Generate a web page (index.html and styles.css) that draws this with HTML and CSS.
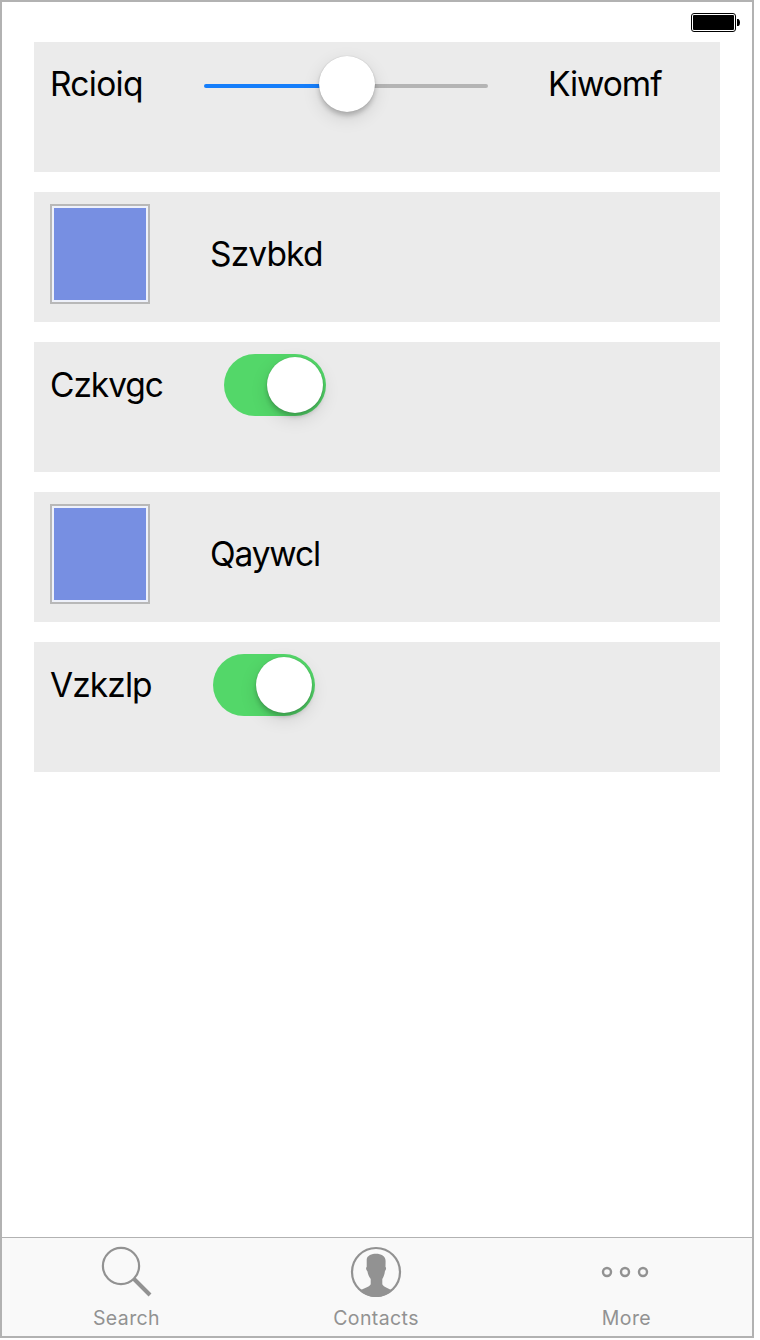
FILE: index.html
```html
<!DOCTYPE html>
<html lang="en">
<head>
<meta charset="utf-8">
<title>Controls</title>
<link rel="stylesheet" href="styles.css">
</head>
<body>
<div class="device">
  <header class="status">
    <svg class="battery" width="50" height="20" viewBox="0 0 50 20">
      <rect x=".5" y=".5" width="44" height="18" rx="2.5" fill="#fff" stroke="#000"/>
      <rect x="2" y="2" width="41" height="15" rx="1" fill="#000"/>
      <path d="M46 6H47.5Q49 7 49 9.5Q49 12 47.5 13H46Z" fill="#000"/>
    </svg>
  </header>
  <main class="cards">
    <section class="card slider-card">
      <span class="label l-min">Rcioiq</span>
      <div class="slider"><div class="track"></div><div class="knob slider-knob"></div></div>
      <span class="label l-max">Kiwomf</span>
    </section>
    <section class="card swatch-card">
      <div class="swatch"></div>
      <span class="label l-first">Szvbkd</span>
    </section>
    <section class="card switch-card">
      <span class="label l-second">Czkvgc</span>
      <div class="switch"><div class="knob"></div></div>
    </section>
    <section class="card swatch-card">
      <div class="swatch"></div>
      <span class="label l-third">Qaywcl</span>
    </section>
    <section class="card switch-card">
      <span class="label l-fourth">Vzkzlp</span>
      <div class="switch"><div class="knob"></div></div>
    </section>
  </main>
  <nav class="tabs">
    <div class="tab">
      <svg class="icon" width="52" height="52" viewBox="0 0 52 52" fill="none" stroke="#929292">
        <circle cx="21" cy="20" r="18.1" stroke-width="2.2"/>
        <path d="M34 33L50 49" stroke-width="4"/>
      </svg>
      <span class="tab-label t-search">Search</span>
    </div>
    <div class="tab">
      <svg class="icon" width="52" height="52" viewBox="0 0 52 52">
        <circle cx="26" cy="26" r="24" fill="none" stroke="#929292" stroke-width="2.2"/>
        <path d="M16.7 13.5C17 9.5 22 7.8 26 7.8C31 7.8 35.6 9.8 35.6 15L35.5 21C36.5 21.5 36.2 23.8 35 25C34.4 29 33.5 31 32.3 33V38.3C33.5 41.5 39.5 42.6 42.2 44.5C37.8 48.6 32 51 26 51C20 51 14.2 48.6 9.8 44.5C12.5 42.6 19.5 41.5 20.7 38.3V33C19 31 18 28.5 17.4 25.3C16 24 15.6 21.6 16.7 21Z" fill="#929292"/>
      </svg>
      <span class="tab-label t-contacts">Contacts</span>
    </div>
    <div class="tab">
      <svg class="icon" width="52" height="52" viewBox="0 0 52 52" fill="none" stroke="#929292" stroke-width="2.4">
        <circle cx="7" cy="26" r="4"/><circle cx="25" cy="26" r="4"/><circle cx="43" cy="26" r="4"/>
      </svg>
      <span class="tab-label t-more">More</span>
    </div>
  </nav>
</div>
</body>
</html>
```
FILE: styles.css
```css
* { box-sizing: border-box; }
body { margin: 0; background: #fff; font-family: Inter, "Liberation Sans", sans-serif; }
.device { display: flex; flex-direction: column; width: 754px; height: 1338px; border: 2px solid #b2b2b2; background: #fff; }
.status { display: flex; justify-content: flex-end; height: 40px; padding: 11px 11px 0 0; }
.cards { display: flex; flex: 1; flex-direction: column; gap: 20px; padding: 0 32px; }
.card { display: flex; align-items: flex-start; height: 130px; background: #ebebeb; padding: 0 16px; }
.label { font-size: 33.5px; line-height: 40px; color: #000; white-space: nowrap; }
.slider-card .label { margin-top: 22px; }
.switch-card .label { margin-top: 23px; }
.swatch-card .label { margin-top: 42px; }
.slider-card .l-min { width: 154px; letter-spacing: -.7px; }
.l-max { letter-spacing: -1.05px; }
.l-first { letter-spacing: -.85px; }
.l-third { letter-spacing: -1.15px; }
.slider { display: grid; width: 284px; height: 56px; margin: 14px 60px 0 0; align-items: center; justify-items: center; }
.track { grid-area: 1 / 1; width: 284px; height: 4px; margin-top: 4px; border-radius: 2px; background: linear-gradient(to right, #157efb 50%, #b4b4b4 50%); }
.knob { width: 56px; height: 56px; border-radius: 50%; background: #fff; box-shadow: 0 0 1px rgba(0,0,0,.25), 0 4px 4px rgba(0,0,0,.18), 0 6px 18px rgba(0,0,0,.12); }
.slider-knob { grid-area: 1 / 1; z-index: 1; margin-left: 2px; }
.swatch { width: 100px; height: 100px; margin: 12px 60px 0 0; padding: 2px; border: 2px solid #b8b8b8; background: #778fe2; background-clip: content-box; box-shadow: inset 0 0 0 2px #eef1fa; }
.switch-card .l-second { width: 174px; letter-spacing: -1.05px; }
.switch-card .l-fourth { width: 163px; letter-spacing: -.9px; }
.switch { display: flex; justify-content: flex-end; width: 102px; height: 62px; margin-top: 12px; padding: 3px; border-radius: 31px; background: #53d769; }
.tabs { display: grid; grid-template-columns: repeat(3, 250px); height: 99px; border-top: 1px solid #b2b2b2; background: #f9f9f9; }
.tab { display: flex; flex-direction: column; align-items: center; padding: 8px 2px 0 0; }
.icon { display: block; }
.tab-label { margin-top: 8px; font-size: 19.5px; line-height: 24px; color: #929292; letter-spacing: .4px; }
.t-search, .t-more { padding-left: 1px; }
```
